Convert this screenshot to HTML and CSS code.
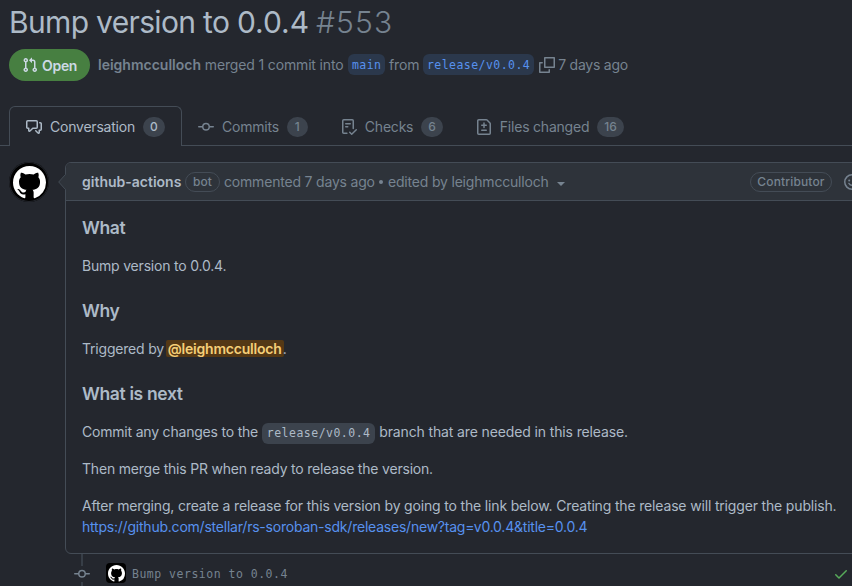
FILE: index.html
```html
<!DOCTYPE html>
<html lang="en">
<head>
<meta charset="utf-8">
<title>Bump version to 0.0.4 #553</title>
<link rel="stylesheet" href="styles.css">
</head>
<body>
<svg width="0" height="0" class="defs">
  <symbol id="mark" viewBox="0 0 16 16"><path d="M8 0C3.58 0 0 3.58 0 8c0 3.54 2.29 6.53 5.47 7.59.4.07.55-.17.55-.38 0-.19-.01-.82-.01-1.49-2.01.37-2.53-.49-2.69-.94-.09-.23-.48-.94-.82-1.13-.28-.15-.68-.52-.01-.53.63-.01 1.08.58 1.23.82.72 1.21 1.87.87 2.33.66.07-.52.28-.87.51-1.07-1.78-.2-3.64-.89-3.64-3.95 0-.87.31-1.59.82-2.15-.08-.2-.36-1.02.08-2.12 0 0 .67-.21 2.2.82.64-.18 1.32-.27 2-.27.68 0 1.36.09 2 .27 1.53-1.04 2.2-.82 2.2-.82.44 1.1.16 1.92.08 2.12.51.56.82 1.27.82 2.15 0 3.07-1.87 3.75-3.65 3.95.29.25.54.73.54 1.48 0 1.07-.01 1.93-.01 2.2 0 .21.15.46.55.38A8.013 8.013 0 0016 8c0-4.42-3.58-8-8-8z"/></symbol>
  <symbol id="commit" viewBox="0 0 16 16"><path fill-rule="evenodd" d="M10.5 7.75a2.5 2.5 0 11-5 0 2.5 2.5 0 015 0zm1.43.75a4.002 4.002 0 01-7.86 0H.75a.75.75 0 110-1.5h3.32a4.001 4.001 0 017.86 0h3.32a.75.75 0 110 1.5h-3.32z"/></symbol>
</svg>
<header class="pr-header">
  <h1><span class="pr-title">Bump version to <span class="version">0.0.4</span></span><span class="pr-number">#553</span></h1>
  <div class="pr-meta">
    <span class="state"><svg class="icon" viewBox="0 0 16 16"><path fill-rule="evenodd" d="M7.177 3.073L9.573.677A.25.25 0 0110 .854v4.792a.25.25 0 01-.427.177L7.177 3.427a.25.25 0 010-.354zM3.75 2.5a.75.75 0 100 1.5.75.75 0 000-1.5zm-2.25.75a2.25 2.25 0 113 2.122v5.256a2.251 2.251 0 11-1.5 0V5.372A2.25 2.25 0 011.5 3.25zM11 2.5h-1V4h1a1 1 0 011 1v5.628a2.251 2.251 0 101.5 0V5A2.5 2.5 0 0011 2.5zm1 10.25a.75.75 0 111.5 0 .75.75 0 01-1.5 0zM3.75 12a.75.75 0 100 1.5.75.75 0 000-1.5z"/></svg><span>Open</span></span>
    <span class="meta-text"><b>leighmcculloch</b> merged 1 commit into</span>
    <code class="branch base">main</code>
    <span class="from">from</span>
    <code class="branch">release/v0.0.4</code>
    <svg class="icon copy" viewBox="0 0 16 16"><path fill="none" stroke="currentColor" stroke-width="1.5" stroke-linejoin="round" stroke-linecap="round" d="M5.75.75h9.5v9.5h-9.5zM3.2 5.75H.75v9.5h9.5V12.8"/></svg>
    <span class="when">7 days ago</span>
  </div>
</header>
<nav class="tabs">
  <a class="tab selected"><svg class="icon" viewBox="0 0 16 16"><path fill-rule="evenodd" d="M1.5 2.75a.25.25 0 01.25-.25h8.5a.25.25 0 01.25.25v5.5a.25.25 0 01-.25.25h-3.5a.75.75 0 00-.53.22L3.5 11.44V9.25a.75.75 0 00-.75-.75h-1a.25.25 0 01-.25-.25v-5.5zM1.75 1A1.75 1.75 0 000 2.75v5.5C0 9.216.784 10 1.75 10H2v1.543a1.457 1.457 0 002.487 1.03L7.061 10h3.189A1.75 1.75 0 0012 8.25v-5.5A1.75 1.75 0 0010.25 1h-8.5zM14.5 4.75a.25.25 0 00-.25-.25h-.5a.75.75 0 110-1.5h.5c.966 0 1.75.784 1.75 1.75v5.5A1.75 1.75 0 0114.25 12H14v1.543a1.457 1.457 0 01-2.487 1.03L9.22 12.28a.75.75 0 111.06-1.06l2.22 2.22v-2.19a.75.75 0 01.75-.75h1a.25.25 0 00.25-.25v-5.5z"/></svg><span class="name">Conversation</span><span class="count">0</span></a>
  <a class="tab"><svg class="icon"><use href="#commit"/></svg><span class="name">Commits</span><span class="count">1</span></a>
  <a class="tab checks"><svg class="icon" viewBox="0 0 16 16"><path fill-rule="evenodd" d="M2.5 1.75a.25.25 0 01.25-.25h8.5a.25.25 0 01.25.25v7.736a.75.75 0 101.5 0V1.75A1.75 1.75 0 0011.25 0h-8.5A1.75 1.75 0 001 1.75v11.5c0 .966.784 1.75 1.75 1.75h3.17a.75.75 0 000-1.5H2.75a.25.25 0 01-.25-.25V1.75zM4.75 4a.75.75 0 000 1.5h4.5a.75.75 0 000-1.5h-4.5zM4 7.75A.75.75 0 014.75 7h2a.75.75 0 010 1.5h-2A.75.75 0 014 7.75zm11.774 3.537a.75.75 0 00-1.048-1.074L10.7 14.145 9.281 12.72a.75.75 0 00-1.062 1.058l1.943 1.95a.75.75 0 001.055.008l4.557-4.45z"/></svg><span class="name">Checks</span><span class="count">6</span></a>
  <a class="tab files"><svg class="icon" viewBox="0 0 16 16"><path fill-rule="evenodd" d="M2.75 1.5a.25.25 0 00-.25.25v12.5c0 .138.112.25.25.25h10.5a.25.25 0 00.25-.25V4.664a.25.25 0 00-.073-.177l-2.914-2.914a.25.25 0 00-.177-.073H2.75zM1 1.75C1 .784 1.784 0 2.75 0h7.586c.464 0 .909.184 1.237.513l2.914 2.914c.329.328.513.773.513 1.237v9.586A1.75 1.75 0 0113.25 16H2.75A1.75 1.75 0 011 14.25V1.75zm7 1.5a.75.75 0 01.75.75v1.5h1.5a.75.75 0 010 1.5h-1.5v1.5a.75.75 0 01-1.5 0V7h-1.5a.75.75 0 010-1.5h1.5V4A.75.75 0 018 3.25zm-3 8a.75.75 0 01.75-.75h4.5a.75.75 0 010 1.5h-4.5a.75.75 0 01-.75-.75z"/></svg><span class="name">Files changed</span><span class="count">16</span></a>
</nav>
<main class="thread">
  <span class="avatar"><svg viewBox="0 0 16 16"><use href="#mark"/></svg></span>
  <article class="comment">
    <svg class="caret" viewBox="0 0 8 16"><path d="M8 0L.7 8 8 16z"/><path class="caret-line" d="M7.5 .5L.7 8l6.8 7.5"/></svg>
    <div class="comment-header">
      <b class="author">github-actions</b>
      <span class="label bot">bot</span>
      <span class="commented">commented 7 days ago</span>
      <span class="dot"></span>
      <span class="edited">edited by leighmcculloch</span>
      <i class="dropdown"></i>
      <span class="label role">Contributor</span>
      <svg class="icon smile" viewBox="0 0 16 16"><g fill="none" stroke="currentColor" stroke-width="1.5" stroke-linecap="round"><circle cx="8" cy="8" r="7.25"/><path d="M5 9.5c1.3 2.4 4.700 2.400 6 0"/></g><circle cx="5.2" cy="6.500" r="1"/><circle cx="10.800" cy="6.500" r="1"/></svg>
    </div>
    <div class="comment-body">
      <h3>What</h3>
      <p>Bump version to 0.0.4.</p>
      <h3>Why</h3>
      <p>Triggered by <a class="mention">@leighmcculloch</a>.</p>
      <h3>What is next</h3>
      <p>Commit any changes to the <code>release/v0.0.4</code> <span class="wide">branch that are needed in this release.</span></p>
      <p>Then merge this PR when ready to release the version.</p>
      <p><span class="after">After merging, create a release for this version by going to the link below. Creating the release will trigger the publish.</span><br><a class="link">https://github.com/stellar/rs-soroban-sdk/releases/new?tag=v0.0.4&amp;title=0.0.4</a></p>
    </div>
  </article>
</main>
<footer class="event">
  <span class="event-badge"><svg class="icon"><use href="#commit"/></svg></span>
  <span class="mini-avatar"><svg viewBox="0 0 16 16"><use href="#mark"/></svg></span>
  <code>Bump version to 0.0.4</code>
  <svg class="icon check" viewBox="0 0 16 16"><path d="M13.78 4.22a.75.75 0 010 1.06l-7.25 7.25a.75.75 0 01-1.06 0L2.22 9.28a.75.75 0 011.06-1.06L6 10.94l6.72-6.72a.75.75 0 011.06 0z"/></svg>
</footer>
</body>
</html>
```
FILE: styles.css
```css
* { box-sizing: border-box; }
html, body { height: 586px; overflow: hidden; }
body {
  margin: 0;
  background: #24272e;
  color: #adbac7;
  font: 14px/21px Inter, "Liberation Sans", sans-serif;
  white-space: nowrap;
}
.defs { position: absolute; }
svg { display: block; fill: currentColor; flex: none; }
.icon { width: 16px; height: 16px; }
code { font-family: "DejaVu Sans Mono", "Liberation Mono", monospace; font-size: 11.5px; line-height: 14px; letter-spacing: .5px; }
b { font-weight: 600; letter-spacing: 0; }

.pr-header { height: 106px; padding-left: 9px; color: #768390; }
h1 { margin: 0; height: 49px; padding-top: 4px; display: flex; gap: 7px; font-size: 30px; line-height: 36px; font-weight: 400; }
.pr-title { color: #adbac7; letter-spacing: -.67px; }
.version { letter-spacing: -.05px; }
.pr-number { font-weight: 300; letter-spacing: 1.1px; }
.pr-meta { display: flex; align-items: center; height: 32px; letter-spacing: -.15px; }
.pr-meta > :not(.state):not(.copy) { position: relative; top: -.5px; }
.state { display: flex; align-items: center; gap: 4px; width: 81px; height: 32px; padding-left: 13px; margin-right: 8px; border-radius: 16px; background: #477f41; color: #cdd9e5; font-weight: 600; letter-spacing: -.3px; }
.meta-text { width: 250px; }
.branch { height: 21px; line-height: 22px; padding: 0 4px; border-radius: 6px; background: #2b384c; color: #5791ee; letter-spacing: .45px; }
.base { width: 37px; }
.from { width: 30px; margin: 0 4px; }
.copy { margin: 0 3px 0 5px; }
.when { letter-spacing: -.25px; }

.tabs { display: flex; height: 40px; padding-left: 9px; box-shadow: inset 0 -1px #444c56; color: #768390; letter-spacing: -.22px; }
.tab { display: flex; align-items: center; height: 40px; padding: 1px 16px 0; border: 1px solid transparent; border-bottom: 0; border-radius: 6px 6px 0 0; }
.tab.selected { width: 173px; margin-right: -1px; color: #adbac7; border-color: #444c56; background: #24272e; }
.tab .icon { position: relative; top: -.5px; margin-right: 8px; }
.name { position: relative; top: -1px; }
.checks, .files { margin-left: -1px; }
.count { min-width: 21px; height: 20px; padding: 0 7px; margin-left: 8px; border-radius: 10px; background: #3c434d; font-size: 12px; font-weight: 500; line-height: 20px; text-align: center; letter-spacing: 0; }

.thread { display: flex; align-items: flex-start; gap: 16px; padding: 16px 0 0 9px; }
.avatar { flex: none; display: flex; align-items: center; justify-content: center; width: 40px; height: 40px; border-radius: 50%; background: #000; color: #fff; box-shadow: inset 0 0 0 1px #202329; }
.avatar svg { width: 33px; height: 33px; }
.comment { position: relative; flex: none; width: 820px; height: 392px; border: 1px solid #444c56; border-radius: 6px; }
.caret { position: absolute; left: -8px; top: 11px; width: 8px; height: 16px; color: #2e333a; }
.caret .caret-line { fill: none; stroke: #444c56; }
.comment-header { display: flex; align-items: center; height: 38px; padding-left: 16px; border-bottom: 1px solid #444c56; border-radius: 5px 5px 0 0; background: #2e333a; color: #768390; letter-spacing: -.19px; }
.author { width: 99px; color: #adbac7; }
.label { height: 20px; border: 1px solid #444c56; border-radius: 10px; font-size: 12px; line-height: 18px; font-weight: 500; letter-spacing: .15px; text-align: center; }
.bot { width: 35px; margin: 0 4px; }
.commented { width: 150px; }
.dot { width: 4px; height: 4px; margin: 0 5px; border-radius: 50%; background: #768390; }
.edited { width: 161px; }
.dropdown { margin-left: 8px; border: 4px solid transparent; border-top-color: #768390; border-bottom: 0; position: relative; top: 2px; }
.role { width: 82px; margin-left: 185px; }
.smile { margin-left: 12px; }
.comment-body { padding: 16px; letter-spacing: -.2px; }
h3 { margin: 24px 0 16px; font-size: 17.5px; line-height: 22px; font-weight: 600; letter-spacing: -.36px; }
h3:first-child { margin-top: 0; }
p { margin: 0 0 16px; }
.mention { padding: 0 2px; margin: 0 -1px 0 -2px; border-radius: 2px; background: #543815; color: #f5cf78; font-weight: 600; }
.comment-body code { padding: 3px 5px 4px; border-radius: 6px; background: #3c434d; letter-spacing: .48px; }
.wide { letter-spacing: -.13px; }
.after { letter-spacing: -.165px; }
.link { color: #5791ee; letter-spacing: -.22px; }

.event { display: flex; align-items: center; height: 40px; padding-left: 74px; color: #768390; }
.event-badge { display: flex; align-items: center; width: 16px; height: 40px; background: linear-gradient(#373e47 12px, transparent 12px 28px, #373e47 28px) center/2px 100% no-repeat; }
.mini-avatar { display: flex; align-items: center; justify-content: center; width: 20px; height: 20px; margin: 0 6px 0 16px; position: relative; top: -1px; border-radius: 4px; background: #000; color: #fff; }
.mini-avatar svg { width: 17px; height: 17px; }
.check { margin-left: auto; margin-right: 3px; color: #57ab5a; }
```
